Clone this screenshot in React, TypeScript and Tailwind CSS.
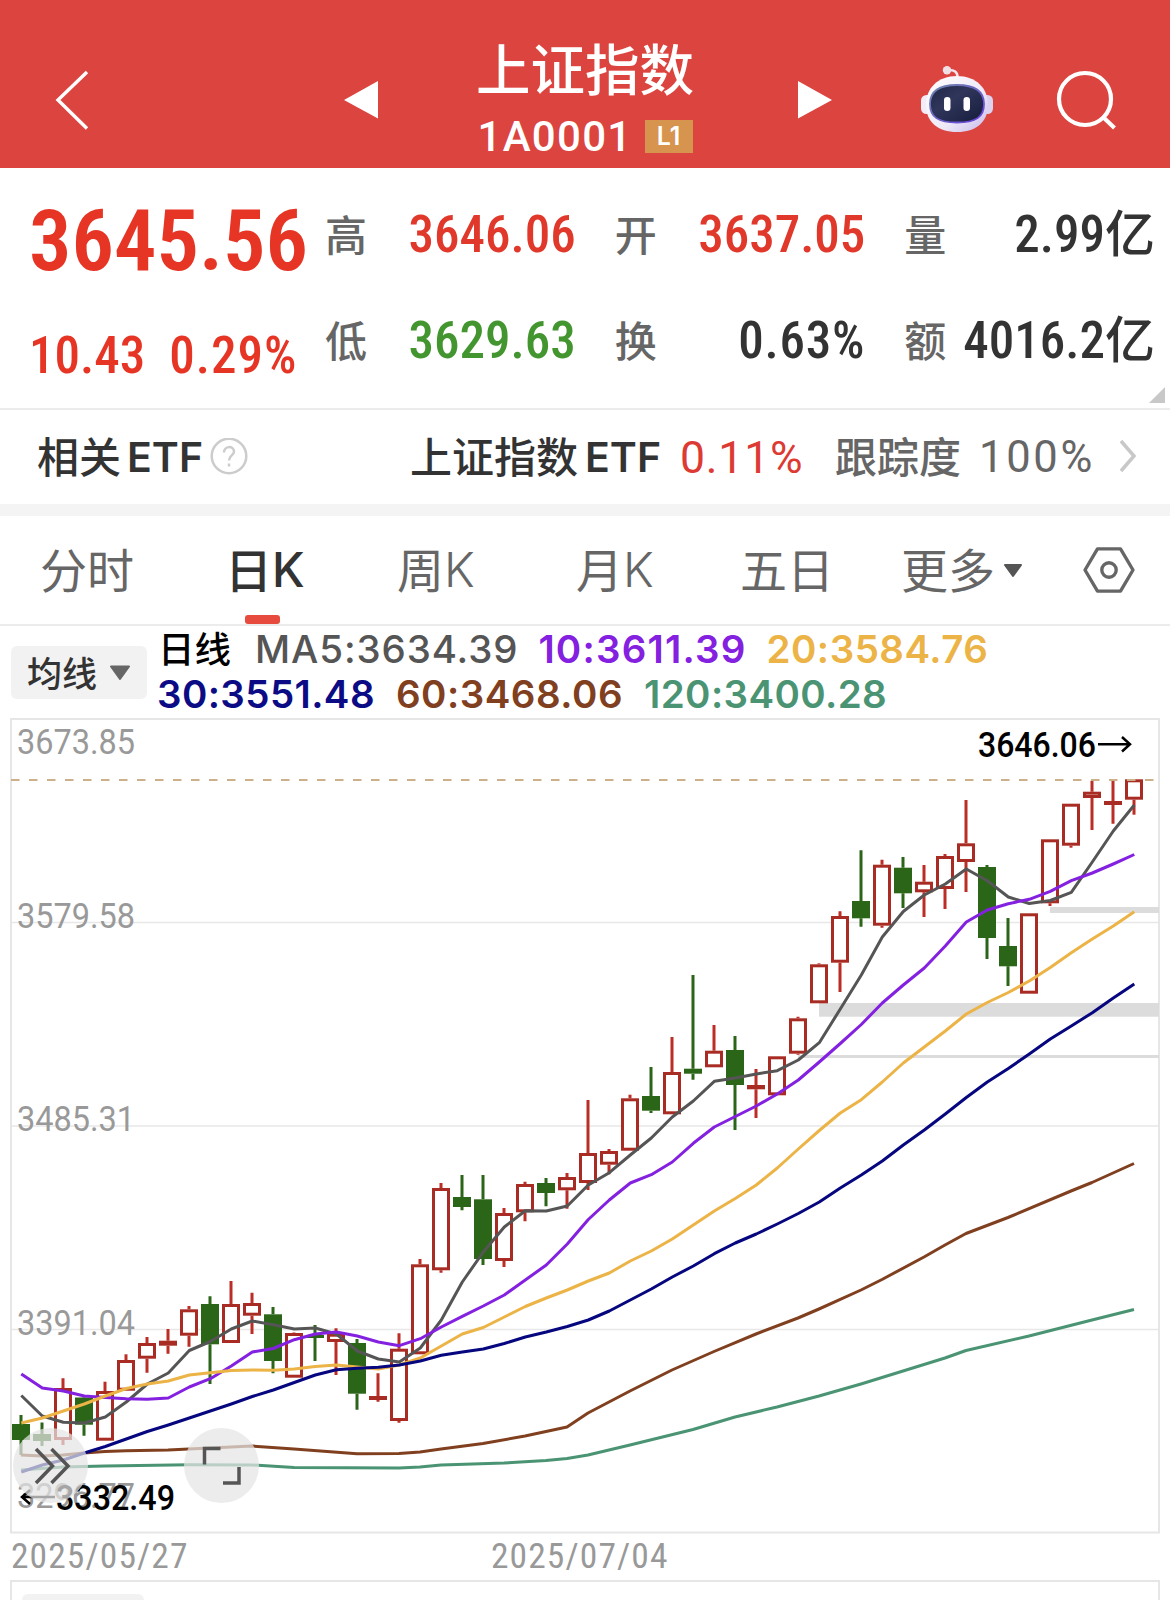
import { ReactElement } from "react"

type Candle = {
    up: boolean
    high: number
    top: number
    bottom: number
    low: number
}

const STEP = 21;

const candleRows: [string, number, number, number, number][] = [
    ["g", 1415, 1424, 1440, 1455],
    ["g", 1422.5, 1434, 1441, 1446],
    ["r", 1378.3, 1388, 1440, 1445],
    ["g", 1397, 1397.5, 1424.7, 1435.7],
    ["r", 1381.7, 1391, 1440.7, 1440.7],
    ["r", 1354.3, 1360, 1390.7, 1390.7],
    ["r", 1337, 1343, 1358.7, 1372.7],
    ["r", 1329, 1340.7, 1345.7, 1353.7],
    ["r", 1306, 1309.3, 1335.7, 1346.7],
    ["g", 1296.3, 1304, 1344.3, 1384],
    ["r", 1281, 1304, 1343, 1343],
    ["r", 1292.7, 1303, 1315.7, 1334],
    ["g", 1307, 1314.3, 1361, 1373.3],
    ["r", 1332.5, 1333, 1377.7, 1377.7],
    ["g", 1325, 1335, 1338, 1361],
    ["r", 1328.3, 1333.7, 1342, 1375],
    ["g", 1339, 1343, 1393.7, 1409.7],
    ["r", 1373.3, 1396, 1400, 1401.7],
    ["r", 1333.3, 1348.7, 1421, 1422.7],
    ["r", 1259, 1264.3, 1354.3, 1354.3],
    ["r", 1183, 1188, 1270.3, 1272.7],
    ["g", 1175, 1197, 1207, 1210.3],
    ["g", 1175, 1199.3, 1259, 1265],
    ["r", 1208, 1213, 1261, 1267],
    ["r", 1181.7, 1184, 1212.3, 1221.3],
    ["g", 1178, 1183, 1193, 1206.3],
    ["r", 1173, 1177, 1190.3, 1208.7],
    ["r", 1100, 1153, 1183, 1190],
    ["r", 1149, 1151, 1164.7, 1174.3],
    ["r", 1094.7, 1098.3, 1150.7, 1150.7],
    ["g", 1067, 1096, 1110.7, 1113],
    ["r", 1037, 1072, 1114.3, 1114.3],
    ["g", 975, 1068.7, 1073.7, 1079.7],
    ["r", 1025, 1050.7, 1067.3, 1067.3],
    ["g", 1036, 1050, 1085, 1130],
    ["r", 1069, 1085, 1089.3, 1118],
    ["r", 1056.3, 1056.3, 1095.3, 1095.3],
    ["r", 1016.7, 1018.3, 1053.7, 1054.7],
    ["r", 963.3, 964.3, 1003.3, 1003.3],
    ["r", 911.3, 916, 962.7, 992],
    ["g", 850.3, 901, 918.3, 926.7],
    ["r", 859.7, 864.7, 925.7, 927.7],
    ["g", 857, 867.7, 893.3, 908],
    ["r", 865, 881.7, 892.3, 917],
    ["r", 854, 856, 889, 909],
    ["r", 800, 843.3, 862, 892],
    ["g", 865, 867, 938, 959],
    ["g", 918, 946, 966.3, 986],
    ["r", 913.3, 913.3, 993.7, 993.7],
    ["r", 839.3, 839.3, 903.3, 906],
    ["r", 803.7, 803.7, 845.7, 847.7],
    ["r", 780.7, 791.7, 798, 830],
    ["r", 780.7, 801, 805, 823.7],
    ["r", 779.3, 779.3, 799.7, 814.7],
];

const candles: Candle[] = candleRows.map(([kind, high, top, bottom, low]) => ({
    up: kind === "r", high, top, bottom, low,
}));

const ma5 = [1395.5, 1416, 1422.3, 1423, 1417, 1402, 1384, 1373, 1350.5, 1341.5, 1329, 1321, 1324.7, 1329, 1328, 1334, 1351, 1359, 1362, 1348, 1320, 1282, 1252, 1227, 1210.7, 1211, 1206, 1185, 1172.7, 1155, 1138, 1117, 1101, 1081.3, 1078, 1074, 1070.7, 1060, 1042.7, 1009, 975, 937, 911.5, 895, 884, 869, 880.7, 897, 903.5, 900.5, 892.3, 862, 831, 805];
const ma10 = [1374, 1388, 1391, 1396, 1397.5, 1398.7, 1399.3, 1398, 1387, 1378.7, 1366, 1352, 1348.5, 1339.7, 1334, 1332, 1336, 1342, 1345.7, 1338.7, 1327, 1316.3, 1306, 1295, 1280, 1265, 1244, 1219.5, 1200, 1183, 1174.7, 1162, 1143.3, 1127, 1116.5, 1106, 1094, 1080, 1062, 1043.5, 1024.5, 1003, 985, 968, 946, 922, 910, 903.7, 899.3, 891.3, 880.7, 873, 864, 854.5];
const ma20 = [1423, 1418, 1411, 1404, 1396, 1388.5, 1384, 1381, 1375, 1372.7, 1370.5, 1370, 1370.3, 1369, 1366.5, 1365, 1367, 1369, 1365, 1358, 1346, 1334, 1327.5, 1317, 1306.5, 1298, 1290, 1281, 1273, 1261, 1251, 1239, 1225, 1211, 1198.5, 1185, 1168, 1149, 1130.5, 1113, 1099.7, 1082, 1063, 1047, 1031, 1014, 1002.5, 992.5, 981, 967.5, 952.7, 939, 926, 911.7];
const ma30 = [1472, 1465, 1460, 1453, 1446.5, 1439, 1431.5, 1425, 1418, 1411, 1404, 1396.5, 1390, 1382.5, 1375, 1369.7, 1368.3, 1367.3, 1365, 1361, 1355.3, 1352, 1349, 1343.5, 1337, 1332, 1326.5, 1320, 1311, 1300, 1289, 1277, 1266, 1253.7, 1243, 1234, 1224, 1213.5, 1202, 1188, 1175, 1161, 1145, 1130, 1114, 1097.5, 1082, 1068.5, 1054, 1039, 1026, 1012.7, 998, 984];

const ma60 = "21,1455 42,1456 63,1455 84,1453 105,1451.5 126,1450.7 168,1450 210,1448 231,1447 252,1446 294,1449 357,1453.7 399,1453.5 420,1452 441,1449 483,1443.5 525,1436 567,1427 588,1413 630,1391 672,1370 714,1351.5 756,1334 798,1318 819,1309 861,1290 882,1279.5 924,1257 945,1245 966,1233.5 1008,1217.5 1071,1191 1092,1182.5 1134,1163.5";
const ma120 = "21,1470 63,1467 105,1466 189,1464.7 252,1465 294,1467.5 399,1468 420,1467 441,1465 504,1463 546,1460.5 567,1458.5 588,1455 630,1445 693,1429.5 735,1417 777,1407 819,1396 861,1384 903,1371 945,1358 966,1350.5 1029,1336 1092,1320 1134,1309.5";

const toPoints = (values: number[]) => values.map((y, idx) => `${21.3 + idx * STEP},${y}`).join(" ");

const averages = [
    { color: "#4a9474", points: ma120 },
    { color: "#80401f", points: ma60 },
    { color: "#555555", points: toPoints(ma5) },
    { color: "#8420e0", points: toPoints(ma10) },
    { color: "#ecb347", points: toPoints(ma20) },
    { color: "#06067f", points: toPoints(ma30) },
];

const axisLabels = [
    { text: "3673.85", y: 754 },
    { text: "3579.58", y: 927.5 },
    { text: "3485.31", y: 1131 },
    { text: "3391.04", y: 1334.5 },
    { text: "3296.77", y: 1508 },
];

const quotes = [
    { label: "高", value: "3646.06", color: "text-[#e0382b]" },
    { label: "开", value: "3637.05", color: "text-[#e0382b]" },
    { label: "量", value: "2.99", unit: "亿", color: "text-[#333333]" },
    { label: "低", value: "3629.63", color: "text-[#43962f]" },
    { label: "换", value: "0.63%", color: "text-[#333333] tracking-[0.8px]" },
    { label: "额", value: "4016.2", unit: "亿", color: "text-[#333333]" },
];

const RobotIcon = () => (
    <svg className="h-[68px] w-[74px]" viewBox="920 65 74 68">
        <defs>
            <linearGradient id="shell" x1="0" y1="0" x2="1" y2="1">
                <stop offset="0" stopColor="#ffffff" />
                <stop offset="0.6" stopColor="#efe9f7" />
                <stop offset="1" stopColor="#c6b8ea" />
            </linearGradient>
            <linearGradient id="visor" x1="0" y1="0" x2="1" y2="1">
                <stop offset="0" stopColor="#1f2748" />
                <stop offset="0.4" stopColor="#30365a" />
                <stop offset="1" stopColor="#141b3a" />
            </linearGradient>
            <linearGradient id="rim" x1="0" y1="0" x2="1" y2="1">
                <stop offset="0" stopColor="#6f87a8" />
                <stop offset="1" stopColor="#6a3fe0" />
            </linearGradient>
        </defs>
        <path d="M957.5 77 Q957.5 69.5 948 70" fill="none" stroke="#f3e3ea" strokeWidth="2.6" />
        <circle cx="947" cy="70.3" r="4.2" fill="#f1dfe6" />
        <rect x="921" y="95" width="12" height="19" rx="5.5" fill="#f1ecf8" />
        <rect x="981" y="95" width="12" height="19" rx="5.5" fill="#dcd2f0" />
        <path d="M957 76 C976 76 988 88 988 105 C988 122 976 132 957 132 C938 132 926 122 926 105 C926 88 938 76 957 76 Z" fill="url(#shell)" />
        <path d="M957 85 C976 85 984 92 984 104 C984 117 976 122.5 957 122.5 C938 122.5 930 117 930 104 C930 92 938 85 957 85 Z" fill="url(#visor)" stroke="url(#rim)" strokeWidth="1.8" />
        <rect x="944" y="97" width="6.5" height="14" rx="3.2" fill="#ffffff" />
        <rect x="963.5" y="97" width="6.5" height="14" rx="3.2" fill="#ffffff" />
    </svg>
)

const Header = (): ReactElement => {
    return (
        <header className="flex h-[168px] items-start bg-[#dc443f] text-white">
            <svg className="mt-[70px] ml-[54px] h-[62px] w-9" viewBox="0 0 36 62" fill="none" stroke="currentColor" strokeWidth="3.4">
                <path d="M33 2 L4 30 L33 58.5" />
            </svg>
            <svg className="mt-[80px] ml-[254px] h-10 w-9" viewBox="0 0 36 40" fill="currentColor">
                <path d="M34 1 V38.5 L0 20 Z" />
            </svg>
            <div className="ml-[95px] flex w-[220px] flex-col items-center pt-8">
                <h1 className="text-[54.5px] leading-[70px] font-medium whitespace-nowrap">上证指数</h1>
                <div className="flex items-center gap-3 pt-[2px]">
                    <span className="pt-px font-[Roboto] text-[42px] leading-[64px] font-medium tracking-[1.3px]">1A0001</span>
                    <span className="flex h-[33px] w-12 items-center justify-center bg-[#d6944f] pt-px font-[Inter] text-[25px] font-semibold">L1</span>
                </div>
            </div>
            <svg className="mt-[80px] ml-[102px] h-10 w-9" viewBox="0 0 36 40" fill="currentColor">
                <path d="M1 1 V38.5 L35 20 Z" />
            </svg>
            <div className="mt-[65px] ml-[87px]">
                <RobotIcon />
            </div>
            <svg className="mt-[70px] ml-[61px] h-[62px] w-[62px]" viewBox="0 0 62 62" fill="none" stroke="currentColor" strokeWidth="4.2">
                <circle cx="30" cy="29" r="26" />
                <path d="M48.5 47.5 L59.5 58" />
            </svg>
        </header>
    )
}

const QuotePanel = (): ReactElement => {
    return (
        <section className="relative flex h-[242px] border-b-2 border-[#ececec]">
            <div className="w-[325px] pl-[29px] font-[Roboto] font-medium text-[#e63525] [font-stretch:85%]">
                <div className="pt-6 text-[84.5px] leading-[100px] font-semibold">3645.56</div>
                <div className="mt-[34px] flex gap-[24px] text-[51px] leading-[60px]">
                    <span>10.43</span>
                    <span className="tracking-[1px]">0.29%</span>
                </div>
            </div>
            <div className="grid w-[830px] grid-cols-3 grid-rows-[106px_106px] gap-x-[39px] pt-[12px]">
                {quotes.map(quote => (
                    <div key={quote.label} className="flex items-center justify-between whitespace-nowrap">
                        <span className="pb-0.5 text-[42px] font-medium text-[#666666]">{quote.label}</span>
                        <span className={`flex items-center pt-[5px] font-[Roboto] text-[51px] font-medium [font-stretch:85%] ${quote.color}`}>
                            {quote.value}
                            {quote.unit && <span className="pb-3 font-['Noto_Sans_CJK_SC'] text-[50px] leading-none">{quote.unit}</span>}
                        </span>
                    </div>
                ))}
            </div>
            <svg className="absolute right-[5px] bottom-[5px] h-4 w-4" viewBox="0 0 16 16" fill="#c8c8c8">
                <path d="M16 0 V16 H0 Z" />
            </svg>
        </section>
    )
}

const EtfRow = (): ReactElement => {
    return (
        <section className="flex h-[106px] items-center border-b-[12px] border-[#f4f4f4] text-[42px] font-medium whitespace-nowrap text-[#333333]">
            <div className="ml-[37px] flex w-[373px] items-center">
                <span className="pb-[5px]">相关</span>
                <span className="ml-1.5 pt-px font-[Inter] text-[41px] font-semibold">ETF</span>
                <svg className="ml-[7px] h-[38px] w-[38px]" viewBox="0 0 38 38" fill="none" stroke="#cccccc" strokeWidth="2.5">
                    <circle cx="19" cy="18" r="17.3" />
                    <path d="M14 14.5 C14 7.5 24 7.5 24 13.5 C24 17.5 19 17.5 19 22.5" />
                    <path d="M19 25.5 V28.5" />
                </svg>
            </div>
            <span className="pb-[5px]">上证指数</span>
            <span className="ml-[7px] pt-px font-[Inter] text-[41px] font-semibold">ETF</span>
            <span className="ml-[19px] w-[119px] pt-0.5 font-[Roboto] text-[44.5px] font-normal tracking-[0.8px] text-[#dc3a33] [font-stretch:90%]">0.11%</span>
            <span className="ml-9 pb-[5px] text-[#666666]">跟踪度</span>
            <span className="ml-[18px] w-[122px] pt-px font-[Roboto] text-[43.5px] font-normal tracking-[2.7px] text-[#666666]">100%</span>
            <svg className="ml-[17px] h-9 w-5" viewBox="0 0 20 36" fill="none" stroke="#c8c8c8" strokeWidth="3.5">
                <path d="M3 2 L16 17 L3 32" />
            </svg>
        </section>
    )
}

const TabLetter = () => <span className="font-[Inter] text-[47.5px] leading-none">K</span>

const Tabs = (): ReactElement => {
    return (
        <nav className="flex h-[110px] items-center border-b-2 border-[#ececec] text-[47px] whitespace-nowrap text-[#666666]">
            <span className="ml-10 w-[185px] pb-1">分时</span>
            <span className="relative flex h-full w-[172px] items-center font-medium text-[#333333]">
                <span className="pb-1">日</span>
                <TabLetter />
                <span className="absolute bottom-0 left-5 h-[9px] w-[35px] rounded-[3px] bg-[#e64b3d]" />
            </span>
            <span className="flex w-[179px] items-center font-light">
                <span className="pb-1 font-normal">周</span>
                <TabLetter />
            </span>
            <span className="flex w-[164px] items-center font-light">
                <span className="pb-1 font-normal">月</span>
                <TabLetter />
            </span>
            <span className="w-[161px] pb-1">五日</span>
            <span className="flex w-[182px] items-center">
                <span className="pb-1">更多</span>
                <svg className="mt-0.5 ml-2 h-4 w-5" viewBox="0 0 20 16" fill="#555555" stroke="#555555" strokeLinejoin="round" strokeWidth="2">
                    <path d="M2 2 H18 L10 13 Z" />
                </svg>
            </span>
            <svg className="h-12 w-[52px]" viewBox="0 0 54 50" fill="none" stroke="#666666" strokeWidth="3.5" strokeLinejoin="round">
                <path d="M15 3 H39 L52 25 L39 47 H15 L2 25 Z" />
                <circle cx="27" cy="25" r="7.5" />
            </svg>
        </nav>
    )
}

const Legend = (): ReactElement => {
    return (
        <section className="flex h-[92px] items-start pl-[11px]">
            <button className="mt-5 flex h-[53px] w-[136px] items-center rounded-md bg-[#f2f2f2] pl-4 text-[35px] leading-none font-medium text-[#333333]">
                <span className="pb-0.5">均线</span>
                <svg className="ml-3 h-4 w-[22px]" viewBox="0 0 22 16" fill="#666666" stroke="#666666" strokeLinejoin="round" strokeWidth="2">
                    <path d="M2 1.5 H20 L11 14 Z" />
                </svg>
            </button>
            <div className="ml-[10px] font-[Inter] text-[38.5px] leading-[45px] font-semibold tracking-[0.5px] whitespace-nowrap">
                <div className="flex h-[45px] items-center">
                    <span className="ml-px pb-[3px] font-['Noto_Sans_CJK_SC'] text-[36.5px] font-medium tracking-normal text-black">日线</span>
                    <span className="ml-[24px] pt-px font-medium tracking-[0.9px] text-[#555555]">MA5:3634.39</span>
                    <span className="ml-[20px] pt-px tracking-[1.2px] text-[#8420e0]">10:3611.39</span>
                    <span className="ml-[20px] pt-px text-[#ecb347]">20:3584.76</span>
                </div>
                <div className="flex h-[45px] items-center pt-px">
                    <span className="tracking-[0.4px] text-[#0b0b85]">30:3551.48</span>
                    <span className="ml-[21px] text-[#80401f]">60:3468.06</span>
                    <span className="ml-[21px] tracking-[0.4px] text-[#4a9474]">120:3400.28</span>
                </div>
            </div>
        </section>
    )
}

const CandleShape = ({ candle, x }: { candle: Candle, x: number }): ReactElement => {
    const { up, high, top, bottom, low } = candle;
    const color = up ? "#a82c23" : "#2b6518";
    const filled = !up || bottom - top < 5.5;

    return (
        <g>
            <path d={`M${x} ${high} V${top} M${x} ${bottom} V${low}`} stroke={up ? "#bb2d25" : color} strokeWidth="3" />
            {filled
                ? <rect x={x - 9} y={top} width="18" height={bottom - top} fill={color} />
                : <rect x={x - 7.5} y={top + 1.5} width="15" height={bottom - top - 3} fill="#ffffff" stroke={color} strokeWidth="3" />
            }
        </g>
    )
}

const Chart = (): ReactElement => {
    return (
        <svg className="block h-[816px] w-full" viewBox="0 718 1170 816">
            <path d="M12 922.5 H1159 M12 1126 H1159 M12 1329.5 H1159" stroke="#e8e8e8" strokeWidth="1.5" />
            <rect x="11" y="719" width="1148" height="813.5" fill="none" stroke="#e6e6e6" strokeWidth="2" />

            <g fill="#dcdcdc">
                <rect x="1050" y="907" width="109" height="6" />
                <rect x="819" y="1003" width="340" height="13.7" />
                <rect x="798" y="1055" width="361" height="3" />
            </g>

            <g fontFamily="Roboto" fontSize="35.5" fontWeight="450" fill="#999999">
                {axisLabels.map(label => (
                    <text key={label.text} x="17" y={label.y} textLength="118" lengthAdjust="spacingAndGlyphs">{label.text}</text>
                ))}
            </g>

            {candles.map((candle, idx) => (
                <CandleShape key={idx} candle={candle} x={21 + idx * STEP} />
            ))}

            {averages.map(line => (
                <polyline key={line.color} points={line.points} fill="none" stroke={line.color} strokeWidth="3" strokeLinejoin="round" />
            ))}

            <path d="M11 780 H1154" stroke="#cbb08a" strokeWidth="1.8" strokeDasharray="8.5 9.5" />

            <g fontFamily="Roboto" fontSize="35.5" fontWeight="500">
                <text x="978" y="757" textLength="118" lengthAdjust="spacingAndGlyphs">3646.06</text>
                <text x="56" y="1510" textLength="119" lengthAdjust="spacingAndGlyphs">3332.49</text>
            </g>
            <g fill="none" stroke="#000000" strokeWidth="2.5">
                <path d="M1098 744.3 H1130 M1122 737 L1130 744.3 L1122 751.5" />
                <path d="M55 1497 H22 M30 1490 L22 1497 L30 1504" />
            </g>

            <g fill="#e4e4e4" fillOpacity="0.72">
                <circle cx="50.5" cy="1465.5" r="37.5" />
                <circle cx="221.5" cy="1465.5" r="37.5" />
            </g>
            <g fill="none" stroke="#555555" strokeWidth="3.5">
                <path d="M36 1449 L52.5 1466 L36 1483 M51.5 1449 L68 1466 L51.5 1483" />
                <path d="M220.5 1448.5 H204.5 V1464.5 M239 1467 V1483 H223" />
            </g>
        </svg>
    )
}

const App = () => {
    return (
        <main className="h-[1600px] w-[1170px] overflow-hidden bg-white font-['Noto_Sans_CJK_SC',sans-serif]">
            <Header />
            <QuotePanel />
            <EtfRow />
            <Tabs />
            <Legend />
            <Chart />
            <div className="flex h-[46px] items-center pl-[11px] font-[Roboto] text-[35.5px] font-[450] tracking-[1.1px] text-[#999999] [font-stretch:82%]">
                <span className="w-[480px]">2025/05/27</span>
                <span>2025/07/04</span>
            </div>
            <div className="ml-[10px] h-10 w-[1150px] border-2 border-[#e6e6e6] pt-3 pl-2.5">
                <div className="h-8 w-[122px] rounded-md bg-[#f2f2f2]" />
            </div>
        </main>
    )
}

export default App
